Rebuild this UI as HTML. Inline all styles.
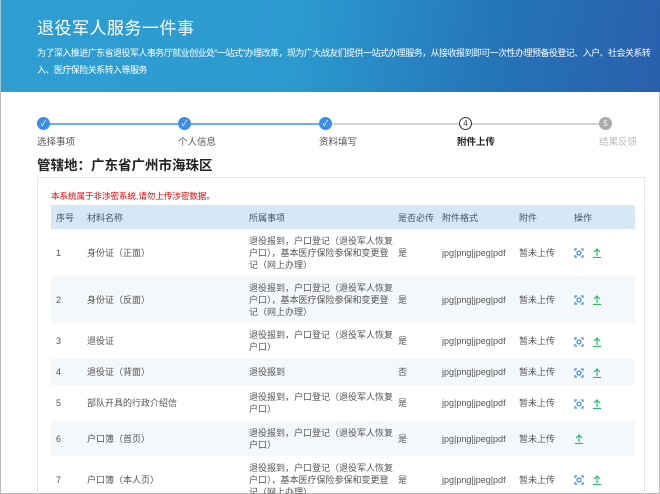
<!DOCTYPE html>
<html><head><meta charset="utf-8"><style>
*{margin:0;padding:0;box-sizing:border-box}
html{width:660px;height:494px;overflow:hidden}
body{width:660px;height:494px;overflow:hidden;background:#fff;font-family:"Liberation Sans","Noto Sans CJK SC",sans-serif;position:relative;border:1px solid #bbb;border-top:none}
.hd{position:absolute;left:0;top:0;width:660px;height:92px;background:linear-gradient(100deg,#2f9fd3 0%,#2b9acf 45%,#2474b8 75%,#2a5fae 100%);color:#fff}
.hd h1{position:absolute;left:36px;top:14px;font-size:17px;font-weight:normal;letter-spacing:.5px}
.hd p{position:absolute;left:36px;top:45px;width:620px;font-size:9px;line-height:17px;letter-spacing:-0.55px;white-space:nowrap}
.st{position:absolute;top:117px;width:13px;height:13px;border-radius:50%;background:#3a8ee6;color:#fff;font-size:8px;text-align:center;line-height:13px}
.ln{position:absolute;top:123px;height:2px}
.lb{position:absolute;top:134px;font-size:9.5px;color:#555}
.t{position:absolute;left:36px;top:154px;font-size:13.5px;font-weight:bold;color:#222}
.card{position:absolute;left:36px;top:177px;width:608px;height:330px;border:1px solid #e6e6e6}
.warn{position:absolute;left:50px;top:190px;font-size:8.5px;color:#e00}
table{position:absolute;left:50px;top:205px;width:584px;border-collapse:collapse;font-size:9px;color:#555}
th{background:#d6e8f8;height:24px;text-align:left;font-weight:normal;color:#456;padding-left:5px}
td{padding:4px 0 4px 5px;line-height:12px;vertical-align:middle}
tr.g td{background:#f4f8fb}
svg{vertical-align:middle}
</style></head><body>
<div class="hd"><h1>退役军人服务一件事</h1><p>为了深入推进广东省退役军人事务厅就业创业处“一站式”办理改革，现为广大战友们提供一站式办理服务，从接收报到即可一次性办理预备役登记、入户、社会关系转<br>入、医疗保险关系转入等服务</p></div>
<div class="ln" style="left:42px;width:282px;background:#6aaef0"></div>
<div class="ln" style="left:324px;width:280px;background:#d5d5d5"></div>
<div class="st" style="left:36px">✓</div><div class="st" style="left:177px">✓</div><div class="st" style="left:318px">✓</div>
<div class="st" style="left:458px;background:#fff;border:1px solid #333;color:#333;line-height:11px">4</div>
<div class="st" style="left:598px;background:#aaa">5</div>
<div class="lb" style="left:36px">选择事项</div><div class="lb" style="left:177px">个人信息</div><div class="lb" style="left:318px">资料填写</div><div class="lb" style="left:456px;color:#222;font-weight:bold">附件上传</div><div class="lb" style="left:598px;color:#bbb">结果反馈</div>
<div class="t">管辖地：广东省广州市海珠区</div>
<div class="card"></div>
<div class="warn">本系统属于非涉密系统,请勿上传涉密数据。</div>
<svg width="0" height="0" style="position:absolute"><defs>
<symbol id="sc" viewBox="0 0 10 10"><path d="M1 3V1h2M7 1h2v2M9 7v2H7M3 9H1V7" fill="none" stroke="#3a8ee6" stroke-width="1.2"/><circle cx="5" cy="5" r="2" fill="none" stroke="#3a8ee6" stroke-width="1.2"/></symbol>
<symbol id="up" viewBox="0 0 10 10"><path d="M5 8V1M2 4l3-3 3 3M1 9.5h8" fill="none" stroke="#2dbb6c" stroke-width="1.2"/></symbol>
</defs></svg>
<table>
<colgroup><col style="width:31px"><col style="width:162px"><col style="width:149px"><col style="width:44px"><col style="width:77px"><col style="width:55px"><col></colgroup>
<tr><th>序号</th><th>材料名称</th><th>所属事项</th><th>是否必传</th><th>附件格式</th><th>附件</th><th>操作</th></tr>
<tr style="height:47px"><td>1</td><td>身份证（正面）</td><td>退役报到，户口登记（退役军人恢复户口），基本医疗保险参保和变更登记（网上办理）</td><td>是</td><td>jpg|png|jpeg|pdf</td><td>暂未上传</td><td><svg width="10" height="10"><use href="#sc"/></svg>&nbsp;&nbsp;&nbsp;<svg width="10" height="10"><use href="#up"/></svg></td></tr>
<tr class="g" style="height:47px"><td>2</td><td>身份证（反面）</td><td>退役报到，户口登记（退役军人恢复户口），基本医疗保险参保和变更登记（网上办理）</td><td>是</td><td>jpg|png|jpeg|pdf</td><td>暂未上传</td><td><svg width="10" height="10"><use href="#sc"/></svg>&nbsp;&nbsp;&nbsp;<svg width="10" height="10"><use href="#up"/></svg></td></tr>
<tr style="height:36px"><td>3</td><td>退役证</td><td>退役报到，户口登记（退役军人恢复户口）</td><td>是</td><td>jpg|png|jpeg|pdf</td><td>暂未上传</td><td><svg width="10" height="10"><use href="#sc"/></svg>&nbsp;&nbsp;&nbsp;<svg width="10" height="10"><use href="#up"/></svg></td></tr>
<tr class="g" style="height:26px"><td>4</td><td>退役证（背面）</td><td>退役报到</td><td>否</td><td>jpg|png|jpeg|pdf</td><td>暂未上传</td><td><svg width="10" height="10"><use href="#sc"/></svg>&nbsp;&nbsp;&nbsp;<svg width="10" height="10"><use href="#up"/></svg></td></tr>
<tr style="height:36px"><td>5</td><td>部队开具的行政介绍信</td><td>退役报到，户口登记（退役军人恢复户口）</td><td>是</td><td>jpg|png|jpeg|pdf</td><td>暂未上传</td><td><svg width="10" height="10"><use href="#sc"/></svg>&nbsp;&nbsp;&nbsp;<svg width="10" height="10"><use href="#up"/></svg></td></tr>
<tr class="g" style="height:35px"><td>6</td><td>户口簿（首页）</td><td>退役报到，户口登记（退役军人恢复户口）</td><td>是</td><td>jpg|png|jpeg|pdf</td><td>暂未上传</td><td><svg width="10" height="10"><use href="#up"/></svg></td></tr>
<tr style="height:47px"><td>7</td><td>户口簿（本人页）</td><td>退役报到，户口登记（退役军人恢复户口），基本医疗保险参保和变更登记（网上办理）</td><td>是</td><td>jpg|png|jpeg|pdf</td><td>暂未上传</td><td><svg width="10" height="10"><use href="#sc"/></svg>&nbsp;&nbsp;&nbsp;<svg width="10" height="10"><use href="#up"/></svg></td></tr>
</table>
</body></html>
